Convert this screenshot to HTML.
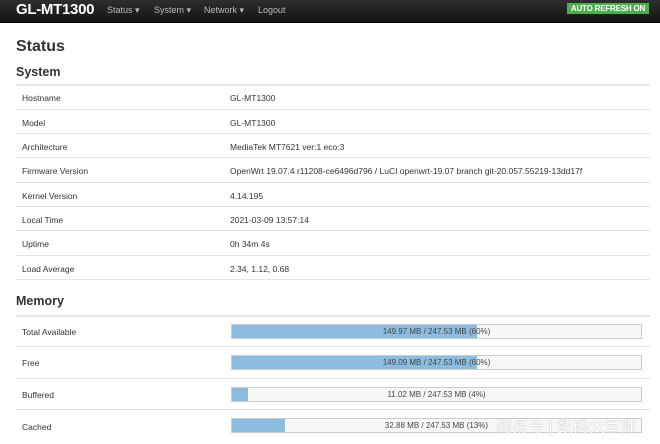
<!DOCTYPE html><html><head><style>
body{margin:0;width:660px;height:444px;overflow:hidden;background:#fff;font-family:"Liberation Sans",Arial,sans-serif;color:#333;position:relative}
.nav{position:absolute;left:0;top:0;width:660px;height:22px;background:linear-gradient(#2e2e2e,#141414);border-bottom:1px solid #000}
.brand{position:absolute;left:16px;top:1px;font-size:15px;color:#fff;font-weight:bold;letter-spacing:-0.3px}
.m{position:absolute;top:5px;font-size:9px;color:#bbb}
.ar{position:absolute;left:567px;top:3px;width:82px;height:11px;background:#4cae4c;color:#fff;font-size:8px;font-weight:bold;line-height:11px;text-align:center;white-space:nowrap;letter-spacing:-0.2px}
h1{position:absolute;left:16px;top:38px;margin:0;font-size:16px;font-weight:bold}
h2{position:absolute;left:16px;margin:0;font-size:12.5px;font-weight:bold}
.r{position:absolute;left:16px;width:634px;border-top:1px solid #e3e3e3;font-size:8.5px}
.r span{position:absolute;top:0}
.bar{position:absolute;left:231px;width:409px;height:13px;border:1px solid #ccc;background:#f7f7f7;font-size:8px;line-height:13px;text-align:center;color:#444}
.bar i{position:absolute;left:0;top:0;bottom:0;background:#8cbde0}
.bar b{position:relative;font-weight:normal}
.wm{position:absolute;left:496px;top:413px;font-family:"Liberation Sans","Noto Sans CJK SC",sans-serif;font-size:16px;color:#fff;text-shadow:0 0 1px #999}
</style></head><body>
<div class="nav"><div class="brand">GL-MT1300</div>
<div class="m" style="left:107px">Status ▾</div><div class="m" style="left:154px">System ▾</div><div class="m" style="left:204px">Network ▾</div><div class="m" style="left:258px">Logout</div>
<div class="ar">AUTO REFRESH ON</div></div>
<h1>Status</h1>
<h2 style="top:65px">System</h2>
<div style="position:absolute;left:16px;top:84px;width:634px;height:2px;background:#e6e6e6"></div>
<div class="r" style="top:86px;border:0"><span style="left:6px;top:7px">Hostname</span><span style="left:214px;top:7px">GL-MT1300</span></div>
<div class="r" style="top:109px"><span style="left:6px;top:8px">Model</span><span style="left:214px;top:8px">GL-MT1300</span></div>
<div class="r" style="top:133px"><span style="left:6px;top:8px">Architecture</span><span style="left:214px;top:8px">MediaTek MT7621 ver:1 eco:3</span></div>
<div class="r" style="top:157px"><span style="left:6px;top:8px">Firmware Version</span><span style="left:214px;top:8px">OpenWrt 19.07.4 r11208-ce6496d796 / LuCI openwrt-19.07 branch git-20.057.55219-13dd17f</span></div>
<div class="r" style="top:182px"><span style="left:6px;top:8px">Kernel Version</span><span style="left:214px;top:8px">4.14.195</span></div>
<div class="r" style="top:206px"><span style="left:6px;top:8px">Local Time</span><span style="left:214px;top:8px">2021-03-09 13:57:14</span></div>
<div class="r" style="top:230px"><span style="left:6px;top:8px">Uptime</span><span style="left:214px;top:8px">0h 34m 4s</span></div>
<div class="r" style="top:255px"><span style="left:6px;top:8px">Load Average</span><span style="left:214px;top:8px">2.34, 1.12, 0.68</span></div>
<div class="r" style="top:279px"></div>
<h2 style="top:294px">Memory</h2>
<div class="r" style="top:315px;border-top:2px solid #e6e6e6"><span style="left:6px;top:10px">Total Available</span></div>
<div class="bar" style="top:324px"><i style="width:60%"></i><b>149.97 MB / 247.53 MB (60%)</b></div>
<div class="r" style="top:346px"><span style="left:6px;top:11px">Free</span></div>
<div class="bar" style="top:355px"><i style="width:60%"></i><b>149.09 MB / 247.53 MB (60%)</b></div>
<div class="r" style="top:378px"><span style="left:6px;top:11px">Buffered</span></div>
<div class="bar" style="top:387px"><i style="width:4%"></i><b>11.02 MB / 247.53 MB (4%)</b></div>
<div class="r" style="top:409px"><span style="left:6px;top:12px">Cached</span></div>
<div class="bar" style="top:418px"><i style="width:13%"></i><b>32.88 MB / 247.53 MB (13%)</b></div>
<div class="wm">网易号 | 数码大军师</div>
</body></html>
